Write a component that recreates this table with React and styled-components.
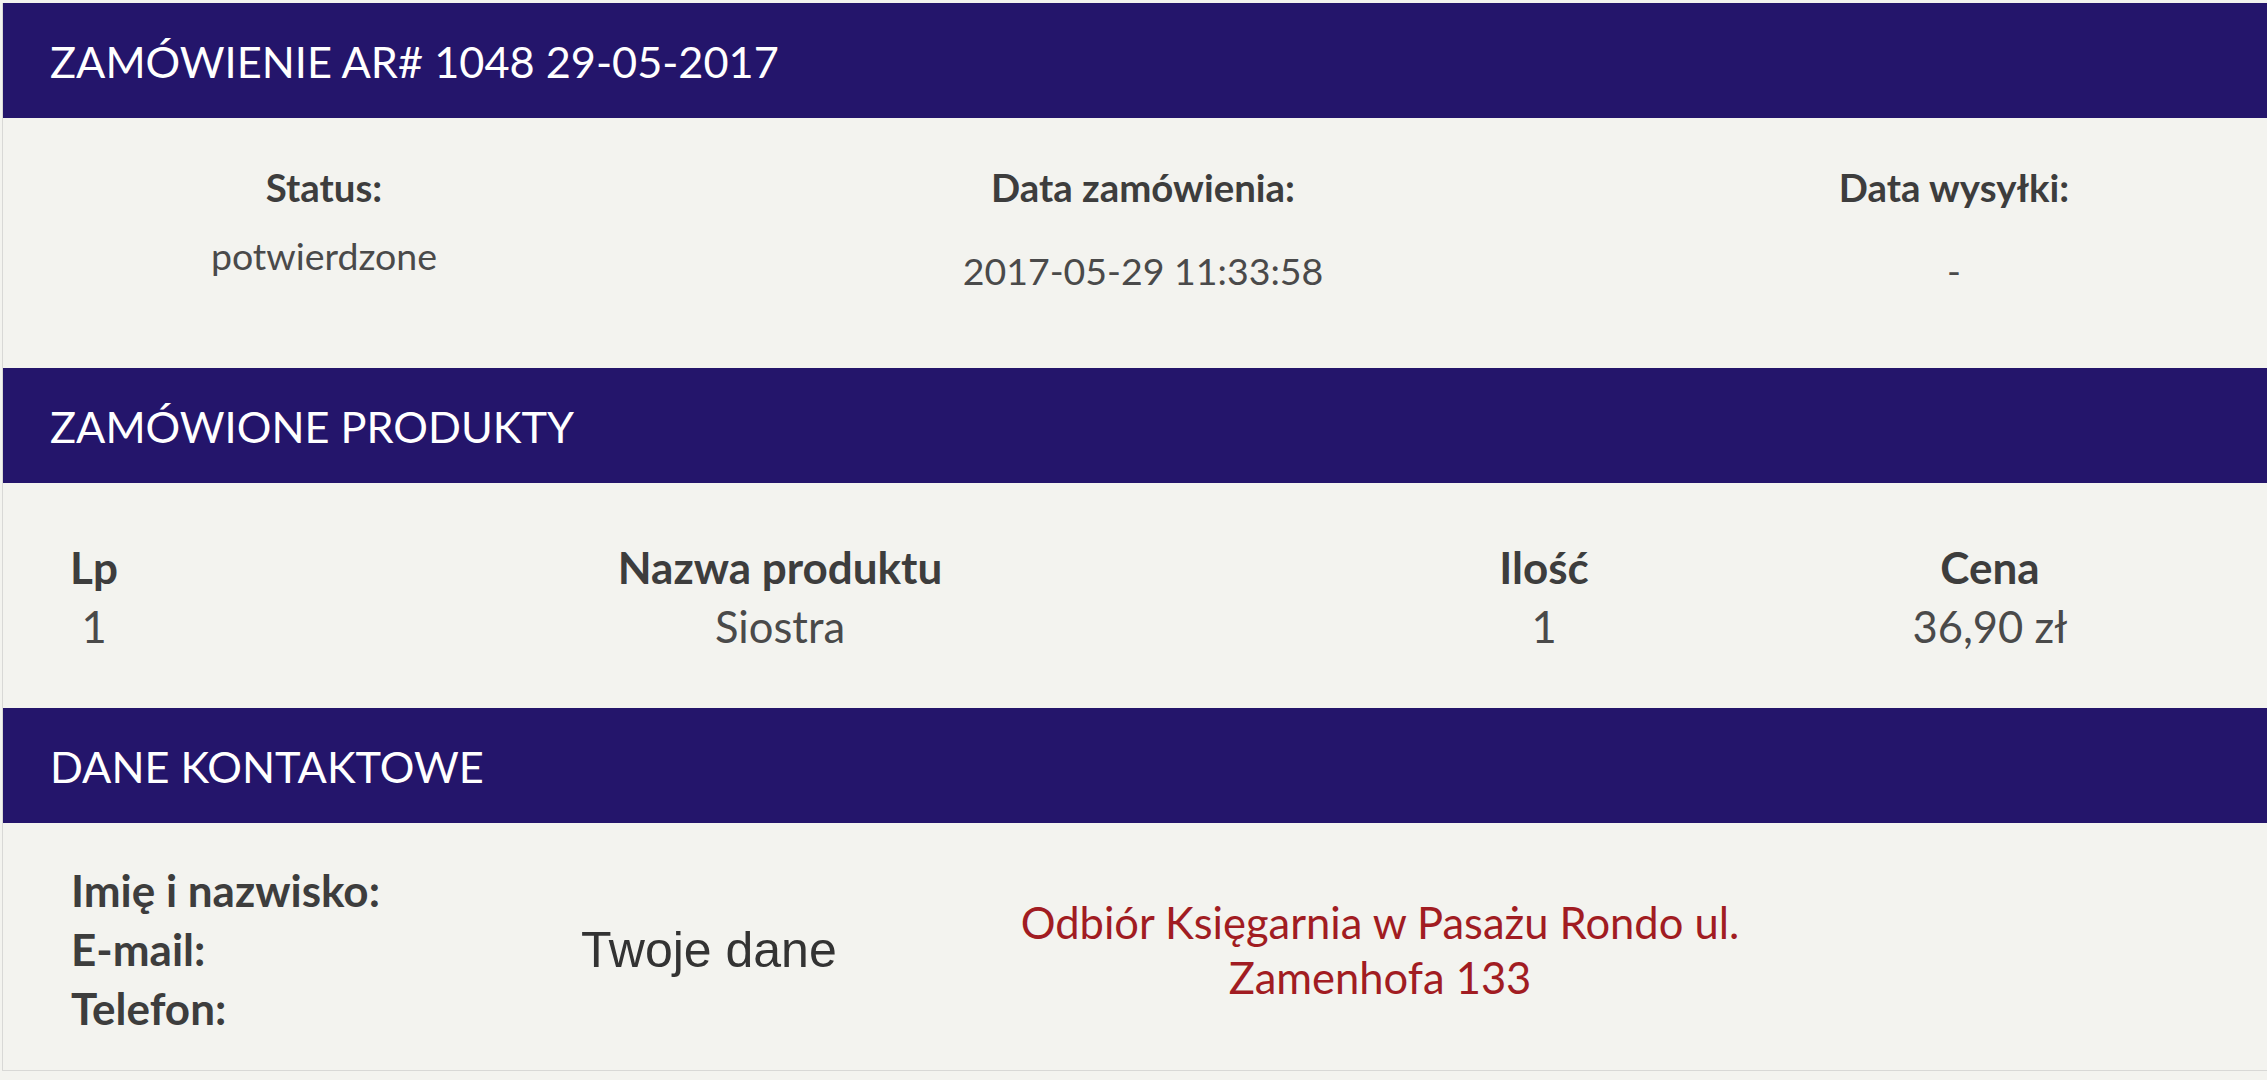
import React from "react";
import styled, { createGlobalStyle } from "styled-components";

const GlobalStyle = createGlobalStyle`
  html, body {
    margin: 0;
    padding: 0;
    background: #f3f3ef;
    font-family: Lato, "Noto Sans", sans-serif;
    overflow: hidden;
  }
`;

const Panel = styled.div`
  margin: 3px 0 0 2px;
  border-left: 1px solid #d8d8d6;
  border-bottom: 1px solid #d8d8d6;
  background: #f3f3ef;
`;

const SectionHeader = styled.h2`
  margin: 0;
  height: 115px;
  box-sizing: border-box;
  padding: 3px 0 0 47px;
  display: flex;
  align-items: center;
  background: #24156b;
  color: #ffffff;
  font-family: Lato, sans-serif;
  font-weight: 400;
  font-size: 43.3px;
  line-height: 1.2;
  text-transform: uppercase;
`;

const InfoGrid = styled.div`
  display: grid;
  grid-template-columns: 642px 996px 1fr;
  height: 250px;
  box-sizing: border-box;
  padding-top: 46px;
  text-align: center;
`;

const InfoCell = styled.div`
  display: flex;
  flex-direction: column;
  align-items: center;
`;

const InfoLabel = styled.div`
  font-weight: 700;
  font-size: 38.4px;
  line-height: 46px;
  color: #3d3d3d;
`;

const InfoValue = styled.div`
  margin-top: ${(p) => p.$offset}px;
  font-weight: 400;
  font-size: 37.5px;
  line-height: 45px;
  color: #4a4a4a;
`;

const ProductTable = styled.div`
  display: grid;
  grid-template-columns: 182px 1190px 338px 1fr;
  grid-auto-rows: 59px;
  align-items: center;
  height: 225px;
  box-sizing: border-box;
  padding: 54px 0 0;
  text-align: center;
`;

const HeadCell = styled.div`
  font-weight: 700;
  font-size: 44px;
  color: #3d3d3d;
`;

const BodyCell = styled.div`
  font-weight: 400;
  font-size: 43.5px;
  color: #4a4a4a;
`;

const ContactGrid = styled.div`
  display: grid;
  grid-template-columns: 578px 438px 722px 1fr;
  align-items: center;
  box-sizing: border-box;
  height: 247px;
  padding: 38px 0 32px;
`;

const ContactLabels = styled.div`
  padding-left: 68px;
  display: flex;
  flex-direction: column;
`;

const ContactLabel = styled.div`
  font-weight: 700;
  font-size: 44px;
  line-height: 59px;
  color: #3d3d3d;
`;

const UserData = styled.div`
  font-family: "Liberation Sans", Arial, sans-serif;
  font-size: 50px;
  line-height: 58px;
  color: #333333;
  white-space: nowrap;
`;

const PickupAddress = styled.div`
  text-align: center;
  font-weight: 400;
  font-size: 43.5px;
  line-height: 55px;
  color: #a11c22;
`;

const info = [
  { label: "Status:", value: "potwierdzone", offset: 23 },
  { label: "Data zamówienia:", value: "2017-05-29 11:33:58", offset: 38 },
  { label: "Data wysyłki:", value: "-", offset: 38 },
];

const headers = ["Lp", "Nazwa produktu", "Ilość", "Cena"];
const products = [["1", "Siostra", "1", "36,90 zł"]];

export default function App() {
  return (
    <>
      <GlobalStyle />
      <Panel>
        <SectionHeader>Zamówienie AR# 1048 29-05-2017</SectionHeader>
        <InfoGrid>
          {info.map((i) => (
            <InfoCell key={i.label}>
              <InfoLabel>{i.label}</InfoLabel>
              <InfoValue $offset={i.offset}>{i.value}</InfoValue>
            </InfoCell>
          ))}
        </InfoGrid>

        <SectionHeader>Zamówione produkty</SectionHeader>
        <ProductTable>
          {headers.map((h) => (
            <HeadCell key={h}>{h}</HeadCell>
          ))}
          {products.map((row) =>
            row.map((c, idx) => <BodyCell key={idx}>{c}</BodyCell>)
          )}
        </ProductTable>

        <SectionHeader>Dane kontaktowe</SectionHeader>
        <ContactGrid>
          <ContactLabels>
            <ContactLabel>Imię i nazwisko:</ContactLabel>
            <ContactLabel>E-mail:</ContactLabel>
            <ContactLabel>Telefon:</ContactLabel>
          </ContactLabels>
          <UserData>Twoje dane</UserData>
          <PickupAddress>
            Odbiór Księgarnia w Pasażu Rondo ul.
            <br />
            Zamenhofa 133
          </PickupAddress>
          <div />
        </ContactGrid>
      </Panel>
    </>
  );
}
